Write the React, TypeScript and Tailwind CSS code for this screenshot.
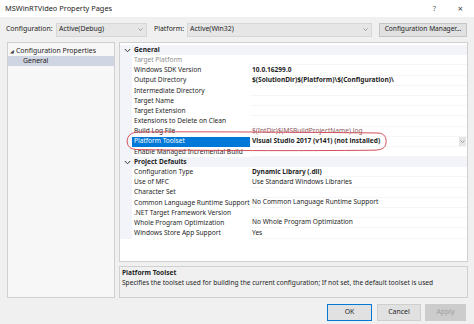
import React from "react";

type Row = { label: string; value?: string; bold?: boolean; dim?: boolean; selected?: boolean; muted?: boolean };

const general: Row[] = [
  { label: "Target Platform", dim: true },
  { label: "Windows SDK Version", value: "10.0.16299.0", bold: true },
  { label: "Output Directory", value: "$(SolutionDir)$(Platform)\\$(Configuration)\\", bold: true },
  { label: "Intermediate Directory" },
  { label: "Target Name" },
  { label: "Target Extension" },
  { label: "Extensions to Delete on Clean" },
  { label: "Build Log File", value: "$(IntDir)$(MSBuildProjectName).log", muted: true },
  { label: "Platform Toolset", value: "Visual Studio 2017 (v141) (not installed)", bold: true, selected: true },
  { label: "Enable Managed Incremental Build" },
];

const defaults: Row[] = [
  { label: "Configuration Type", value: "Dynamic Library (.dll)", bold: true },
  { label: "Use of MFC", value: "Use Standard Windows Libraries" },
  { label: "Character Set" },
  { label: "Common Language Runtime Support", value: "No Common Language Runtime Support" },
  { label: ".NET Target Framework Version" },
  { label: "Whole Program Optimization", value: "No Whole Program Optimization" },
  { label: "Windows Store App Support", value: "Yes" },
];

function Chevron() {
  return (
    <svg width="7" height="5" viewBox="0 0 7 5" className="block">
      <path d="M0.8 1 L3.5 3.8 L6.2 1" fill="none" stroke="#333" strokeWidth="1" />
    </svg>
  );
}

function SmallArrow() {
  return (
    <svg width="5" height="3" viewBox="0 0 5 3" className="block">
      <path d="M0.5 0.5 L2.5 2.5 L4.5 0.5" fill="none" stroke="#888" strokeWidth="0.8" />
    </svg>
  );
}

function Header({ title }: { title: string }) {
  return (
    <div className="flex h-[10.2px] items-center bg-[#f3f4f9]">
      <div className="flex w-[14px] justify-center pl-[1px]">
        <Chevron />
      </div>
      <span className="font-bold text-[#1e1e1e]">{title}</span>
    </div>
  );
}

function PropRow({ r }: { r: Row }) {
  return (
    <div className="flex h-[10.2px] items-center">
      <div className="h-full w-[12px] bg-[#f3f4f9]" />
      <div
        className={
          "flex h-full w-[118px] items-center whitespace-nowrap pl-[2px] " +
          (r.selected ? "bg-[#0078d7] text-white" : r.dim ? "text-[#8d8d8d]" : "text-[#1e1e1e]")
        }
      >
        <span>{r.label}</span>
      </div>
      <div className="flex h-full flex-1 items-center whitespace-nowrap border-b border-[#f6f6f6] pl-[2px]">
        <span className={r.bold ? "font-bold text-[#1e1e1e]" : r.muted ? "text-[#8a5a5e]" : "text-[#1e1e1e]"}>
          {r.value ?? ""}
        </span>
        {r.selected && (
          <div className="ml-auto mr-[1px] flex h-[9px] w-[7px] items-center justify-center bg-[#e6e6e6]">
            <SmallArrow />
          </div>
        )}
      </div>
    </div>
  );
}

export default function App() {
  return (
    <div className="relative h-[324px] w-[474px] overflow-hidden bg-[#f0f0f0] font-['Segoe_UI','Noto_Sans',sans-serif] text-[6.6px] leading-none text-[#1e1e1e]">
      {/* title bar */}
      <div className="flex h-[17px] items-center bg-white pl-[5px] pr-[11px] text-[7.4px]">
        <span>MSWinRTVideo Property Pages</span>
        <span className="ml-auto text-[#666]">?</span>
        <span className="ml-[22px] text-[9px] text-[#444]">×</span>
      </div>

      {/* toolbar */}
      <div className="flex h-[25px] items-center whitespace-nowrap pl-[6px] text-[6.9px]">
        <span className="w-[50px]">Configuration:</span>
        <div className="flex h-[14px] w-[91px] items-center border border-[#d6d6d6] bg-[#e6e6e6] pl-[2px] pr-[3px]">
          <span>Active(Debug)</span>
          <span className="ml-auto"><SmallArrow /></span>
        </div>
        <span className="ml-[7px] w-[33px]">Platform:</span>
        <div className="flex h-[14px] w-[185px] items-center border border-[#d6d6d6] bg-[#e6e6e6] pl-[2px] pr-[3px]">
          <span>Active(Win32)</span>
          <span className="ml-auto"><SmallArrow /></span>
        </div>
        <div className="ml-[7px] flex h-[14px] w-[88px] items-center justify-center border border-[#c6c6c6] bg-[#e1e1e1] text-[6.6px]">
          Configuration Manager...
        </div>
      </div>

      {/* main */}
      <div className="flex h-[256px] pl-[7px]">
        {/* tree */}
        <div className="w-[108px] border border-[#d0d0d0] bg-[#f7f7f7] pt-[3px] text-[6.9px]">
          <div className="flex h-[10px] items-center pl-[2px]">
            <span className="mr-[2px] text-[5px] text-[#444]">◢</span>
            <span>Configuration Properties</span>
          </div>
          <div className="flex h-[10px] items-center bg-[#cfd5e2] pl-[15px]">General</div>
        </div>

        {/* right */}
        <div className="ml-[4px] flex w-[349px] flex-col">
          <div className="relative h-[220px] border border-[#d0d0d0] bg-white pt-[2px]">
            <Header title="General" />
            {general.map((r) => (
              <PropRow key={r.label} r={r} />
            ))}
            <Header title="Project Defaults" />
            {defaults.map((r) => (
              <PropRow key={r.label} r={r} />
            ))}
            <svg className="absolute left-[6px] top-[87px]" width="262" height="22" viewBox="0 0 262 22">
              <path
                d="M12 2 C70 1.5 180 2.2 252 3 C259 3.3 260.5 8 260 13 C259.5 18 256 20 248 20.2 C170 21 80 20.6 12 19.6 C4 19.4 1 16 1.2 11 C1.4 6 5 2.2 12 2 Z"
                fill="none"
                stroke="#d4505a"
                strokeWidth="1"
              />
            </svg>
          </div>
          <div className="mt-[4px] h-[32px] whitespace-nowrap border border-[#d0d0d0] bg-[#f0f0f0] pl-[2px] pt-[3px]">
            <div className="font-bold">Platform Toolset</div>
            <div className="mt-[3px]">
              Specifies the toolset used for building the current configuration; If not set, the default toolset is used
            </div>
          </div>
        </div>
      </div>

      {/* buttons */}
      <div className="mt-[6px] flex h-[17px] pl-[327px] text-[6.9px]">
        <div className="flex w-[45px] items-center justify-center border border-[#0078d7] bg-[#e1e1e1]">OK</div>
        <div className="ml-[5px] flex w-[44px] items-center justify-center border border-[#cfcfcf] bg-[#e1e1e1]">
          Cancel
        </div>
        <div className="ml-[4px] flex w-[41px] items-center justify-center border border-[#cccccc] bg-[#cccccc] text-[#a0a0a0]">
          Apply
        </div>
      </div>
    </div>
  );
}
